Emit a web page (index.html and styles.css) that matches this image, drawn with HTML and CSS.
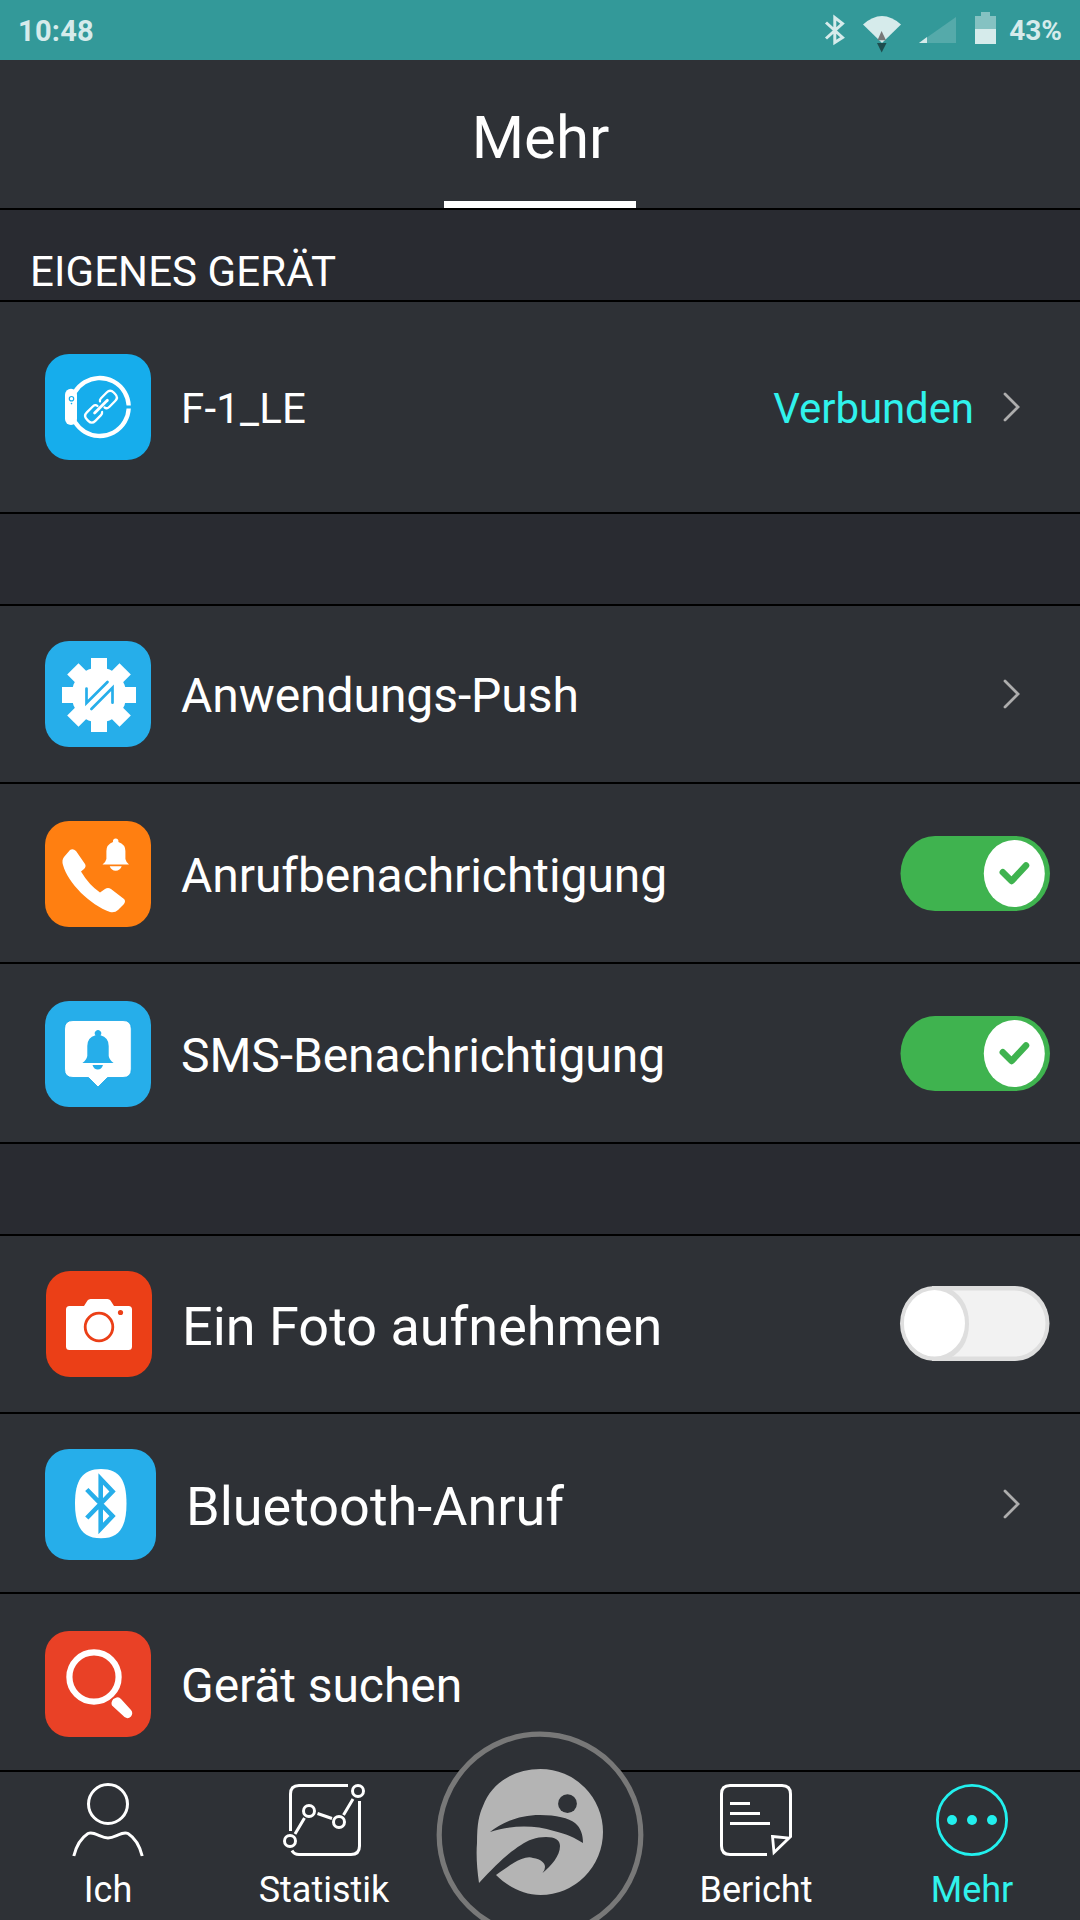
FILE: index.html
```html
<!DOCTYPE html>
<html lang="de">
<head>
<meta charset="utf-8">
<title>Mehr</title>
<link rel="stylesheet" href="styles.css">
</head>
<body>
<div class="screen">
  <div class="statusbar">
    <span class="clock">10:48</span>
    <div class="status-icons">
      <svg class="st-bt" width="20" height="60" viewBox="0 0 20 60" fill="none" stroke="#d6ebeb" stroke-width="3"><path d="M1 22.500 L17.500 37.500 L9.800 42.500 V17.500 L17.500 23.500 L1 38.500"/></svg>
      <svg class="st-wifi" width="38" height="60" viewBox="0 0 38 60"><path fill="#d6ebeb" d="M0 24.500 Q19 7.500 38 24.500 L19 43 Z"/><path fill="#777" d="M14.500 40.300 L18.600 31 L23 40.300 Z"/><path fill="#1d4c4d" d="M14 43 H23.500 L18.700 52.500 Z"/></svg>
      <svg class="st-signal" width="37" height="60" viewBox="0 0 37 60"><path fill="#55aaaa" d="M0 43 L37 17 V43 Z"/><path fill="#d6ebeb" d="M0 43 L8 37 V43 Z"/></svg>
      <svg class="st-batt" width="21" height="60" viewBox="0 0 21 60"><path fill="#85c2c2" d="M6 12 H15 V16 H21 V29 H0 V16 H6 Z"/><path fill="#d6ebeb" d="M0 29 H21 V44 H0 Z"/></svg>
      <span class="percent">43%</span>
    </div>
  </div>

  <header class="header"><h1 class="title">Mehr</h1></header>

  <main class="list">
    <div class="section section-title">EIGENES GERÄT</div>

    <div class="row device">
      <svg class="icon" width="106" height="106" viewBox="0 0 106 106">
        <rect width="106" height="106" rx="24" fill="#16adec"/>
        <path d="M83.700 51.500 A29 29 0 1 0 83.700 54.500" fill="none" stroke="#fff" stroke-width="4.300"/>
        <rect x="20" y="34.700" width="12" height="36.300" rx="6" fill="#fff"/>
        <circle cx="26.500" cy="44.700" r="2.200" fill="none" stroke="#16adec" stroke-width="1.200"/>
        <circle cx="26.500" cy="49.600" r=".8" fill="#16adec"/>
        <g transform="translate(56 52.700) rotate(-45)" fill="none" stroke="#fff" stroke-width="2.300" stroke-linecap="round">
          <path d="M-3 4.500 Q-4 6 -6 6 H-14 Q-19 6 -19 1 V-1 Q-19 -6 -14 -6 H-6 Q-2 -6 -2 -3"/>
          <path d="M3 -4.500 Q4 -6 6 -6 H14 Q19 -6 19 -1 V1 Q19 6 14 6 H6 Q2 6 2 3"/>
          <path d="M-9 0 H9" stroke-width="2.800"/>
        </g>
      </svg>
      <span class="label">F-1_LE</span>
      <span class="state">Verbunden</span>
      <svg class="chevron" width="17" height="30" viewBox="0 0 17 30"><path d="M2 2 L15 15 L2 28"/></svg>
    </div>

    <div class="section"></div>

    <div class="row">
      <svg class="icon" width="106" height="106" viewBox="0 0 106 106">
        <rect width="106" height="106" rx="24" fill="#26aeea"/>
        <g transform="translate(54 54)" fill="#fff">
          <circle r="27.500"/>
          <rect x="-8" y="-37" width="16" height="74"/>
          <rect x="-8" y="-37" width="16" height="74" transform="rotate(45)"/>
          <rect x="-8" y="-37" width="16" height="74" transform="rotate(90)"/>
          <rect x="-8" y="-37" width="16" height="74" transform="rotate(135)"/>
        </g>
        <path d="M41.500 47.500 V62 L62.500 41 M46.400 68 L67.500 46.800 V61.700" fill="none" stroke="#26aeea" stroke-width="2.700" stroke-linecap="round"/>
      </svg>
      <span class="label">Anwendungs-Push</span>
      <svg class="chevron" width="17" height="30" viewBox="0 0 17 30"><path d="M2 2 L15 15 L2 28"/></svg>
    </div>

    <div class="row tall">
      <svg class="icon" width="106" height="106" viewBox="0 0 106 106">
        <rect width="106" height="106" rx="24" fill="#ff7f11"/>
        <path fill="#fff" d="M25 29 Q28 27 31 30 L40 43 Q41.500 45.500 39 48 L36 50.500 Q44 64 55 71.500 L60 68 Q63 66 66 68 L79 78 Q81 80 79 83 L73 89 Q70 92 65 91 C45 84 23 62 18 44 Q16.500 39 19 36 Z"/>
        <path fill="#fff" d="M68 21 A2.800 2.800 0 1 1 73.400 21 Q80.400 23.500 80.400 30 V38 Q81 41 84 43.500 H57.500 Q60.800 41 61.400 38 V30 Q61.400 23.500 68 21 Z M64.700 45.300 H76.700 Q75 49.700 70.700 49.700 Q66.400 49.700 64.700 45.300 Z"/>
      </svg>
      <span class="label">Anrufbenachrichtigung</span>
      <svg class="toggle" width="150" height="75" viewBox="0 0 150 75"><rect x=".5" width="149.500" height="75" rx="34.500" ry="37.500" fill="#3fb34f"/><ellipse cx="114.300" cy="37.500" rx="30.500" ry="33.500" fill="#fff"/><path d="M102.800 36.300 L111.600 45 L126 29.500" fill="none" stroke="#3fb34f" stroke-width="6.500" stroke-linecap="round" stroke-linejoin="round"/></svg>
    </div>

    <div class="row tall">
      <svg class="icon" width="106" height="106" viewBox="0 0 106 106">
        <rect width="106" height="106" rx="24" fill="#26aeea"/>
        <path fill="#fff" stroke="#12a3e6" stroke-width=".8" d="M28 19.500 H78 Q86.300 19.500 86.300 28 V68 Q86.300 76.500 78 76.500 H62.500 L53 86 L43.500 76.500 H28 Q19.500 76.500 19.500 68 V28 Q19.500 19.500 28 19.500 Z"/>
        <path fill="#26aeea" d="M50.500 34.300 A3.200 3.200 0 1 1 55.500 34.300 Q63.700 36.500 63.700 45 V55 Q64.500 59 68.600 62 H37.400 Q41.500 59 42.300 55 V45 Q42.300 36.500 50.500 34.300 Z M47.500 64 H58 Q56.500 68.500 52.800 68.500 Q49 68.500 47.500 64 Z"/>
      </svg>
      <span class="label">SMS-Benachrichtigung</span>
      <svg class="toggle" width="150" height="75" viewBox="0 0 150 75"><rect x=".5" width="149.500" height="75" rx="34.500" ry="37.500" fill="#3fb34f"/><ellipse cx="114.300" cy="37.500" rx="30.500" ry="33.500" fill="#fff"/><path d="M102.800 36.300 L111.600 45 L126 29.500" fill="none" stroke="#3fb34f" stroke-width="6.500" stroke-linecap="round" stroke-linejoin="round"/></svg>
    </div>

    <div class="section"></div>

    <div class="row photo">
      <svg class="icon" width="106" height="106" viewBox="0 0 106 106">
        <rect width="106" height="106" rx="24" fill="#eb3f17"/>
        <path fill="#fff" d="M23.500 35 H38 L41.500 29.500 Q42.500 28 44.500 28 H61.500 Q63.500 28 64.500 29.500 L68 35 H82.500 Q86 35 86 38.500 V75.500 Q86 79 82.500 79 H23.500 Q20 79 20 75.500 V38.500 Q20 35 23.500 35 Z"/>
        <circle cx="53" cy="56" r="13.800" fill="none" stroke="#eb3f17" stroke-width="2.800"/>
        <circle cx="74.500" cy="41.500" r="2.600" fill="#eb3f17"/>
      </svg>
      <span class="label large">Ein Foto aufnehmen</span>
      <svg class="toggle off" width="150" height="75" viewBox="0 0 150 75"><rect width="149.500" height="75" rx="34.500" ry="37.500" fill="#dedede"/><rect x="4" y="4.500" width="141.500" height="66" rx="31" ry="33" fill="#f2f2f2"/><path d="M32 0 H44 Q69 10 69 37.500 Q69 65 44 75 H32 Z" fill="#dedede"/><ellipse cx="34.500" cy="37.300" rx="30.500" ry="33.300" fill="#fff"/></svg>
    </div>

    <div class="row tall call">
      <svg class="icon" width="111" height="111" viewBox="0 0 111 111">
        <rect width="111" height="111" rx="24" fill="#26aeea"/>
        <path fill="#fff" d="M56 20 C75 20 81.500 32 81.500 54.500 C81.500 77 75 89.300 56 89.300 C37 89.300 30 77 30 54.500 C30 32 37 20 56 20 Z"/>
        <path d="M41.800 40.500 L67.500 67 L55.700 79.500 V30 L67.500 42.500 L41.800 69" fill="none" stroke="#26aeea" stroke-width="4.600"/>
      </svg>
      <span class="label large">Bluetooth-Anruf</span>
      <svg class="chevron" width="17" height="30" viewBox="0 0 17 30"><path d="M2 2 L15 15 L2 28"/></svg>
    </div>

    <div class="row last">
      <svg class="icon" width="106" height="106" viewBox="0 0 106 106">
        <rect width="106" height="106" rx="24" fill="#e94126"/>
        <circle cx="49" cy="46" r="24.600" fill="none" stroke="#fff" stroke-width="6.200"/>
        <path d="M68.300 68 L71.500 66.500 Q74 65.500 76 68 L86 79 Q88.500 82 86 85.500 Q83 88.500 79.500 86 L67 74.500 Q65.500 71.500 68.300 68 Z" fill="#fff"/>
      </svg>
      <span class="label">Gerät suchen</span>
    </div>
  </main>

  <nav class="nav">
    <a class="tab">
      <svg width="72" height="72" viewBox="0 0 72 72" fill="none" stroke="#fff" stroke-width="3"><circle cx="36" cy="20" r="19.500"/><path d="M1.800 72 C4 63 9 54 16 49.500 Q18.500 48.300 22 49.500 C28 51.500 31 54 36 54 C41 54 44 51.500 50 49.500 Q53.500 48.300 56 49.500 C63 54 68 63 70.200 72"/></svg>
      <span>Ich</span>
    </a>
    <a class="tab">
      <svg width="84" height="72" viewBox="0 0 84 72" fill="none" stroke="#fff" stroke-width="3"><path d="M66 1.500 H17 Q8.500 1.500 8.500 10 V47 M10 66.500 Q12 70.500 17 70.500 H69 Q77.500 70.500 77.500 62 V17"/><circle cx="8" cy="57" r="5.500"/><circle cx="27" cy="27" r="5.500"/><circle cx="57" cy="38" r="5.500"/><circle cx="76" cy="7" r="5.500"/><path d="M13 50 L22.500 34 M35.500 29.500 L50 34.500 M61.500 31 L71 15"/></svg>
      <span>Statistik</span>
    </a>
    <a class="tab home">
      <svg class="home-logo" width="208" height="208" viewBox="0 0 208 208"><circle cx="104" cy="104" r="100.800" fill="#2e3136" stroke="#787878" stroke-width="5.200"/><path fill="#b4b4b4" d="M43 152 C41 138 40 124 41 112 C41 92 43 84 47 75 C56 51 79 38 104.500 38 A62.500 63 0 0 1 104.500 164 C88 164 72 156 60 144 C68 138 74 134 77.500 132 C84 128 92 125 97 127 C105 128 109 132 109 136 Q109 139 106.500 142 C115 135 124 125 124 115 C124 109 119 106 110 106 C100 106 92 109 85 114 C72 122 60 134 43 152 Z"/><path fill="#2e3136" d="M54 101 C66 91 84 84 104 84 C120 84 133 87 139 92 C145 97 147 104 147 112 C139 107 131 103 118 100 C98 94 76 94 54 101 Z"/><circle cx="131.500" cy="72.700" r="9.400" fill="#2e3136"/></svg>
    </a>
    <a class="tab">
      <svg width="72" height="72" viewBox="0 0 72 72" fill="none" stroke="#fff" stroke-width="3"><path d="M47 70.500 H10 Q1.500 70.500 1.500 62 V10 Q1.500 1.500 10 1.500 H62 Q70.500 1.500 70.500 10 V53"/><path d="M10 19.500 H30 M10 29.500 H40 M10 39.500 H50"/><path d="M52.500 52.500 L69 54 L54 68.500 Z" stroke-width="2.800"/></svg>
      <span>Bericht</span>
    </a>
    <a class="tab active">
      <svg width="72" height="72" viewBox="0 0 72 72"><circle cx="36" cy="36" r="34.600" fill="none" stroke="#22f0ee" stroke-width="2.800"/><g fill="#22f0ee"><circle cx="16" cy="36" r="5"/><circle cx="36" cy="36" r="5"/><circle cx="56" cy="36" r="5"/></g></svg>
      <span>Mehr</span>
    </a>
  </nav>
</div>
</body>
</html>
```
FILE: styles.css
```css
* { box-sizing: border-box; }

body {
  margin: 0;
  background: #2e3136;
  color: #fff;
  font-family: Roboto, "Liberation Sans", sans-serif;
}

svg { display: block; flex: none; overflow: visible; }

.screen {
  width: 1080px;
  height: 1920px;
  overflow: hidden;
  display: flex;
  flex-direction: column;
}

.statusbar {
  height: 60px;
  padding: 0 18px;
  display: flex;
  justify-content: space-between;
  align-items: center;
  background: #339999;
  color: #d6ebeb;
  font-size: 29px;
  font-weight: 700;
  line-height: 60px;
}

.clock, .percent { padding-top: 2px; line-height: 58px; }
.clock { letter-spacing: 0.25px; }
.percent { font-size: 28px; margin-left: 13px; }
.status-icons { display: flex; align-items: center; }
.st-wifi { margin-left: 18px; }
.st-signal { margin-left: 18px; }
.st-batt { margin-left: 19px; }

.header {
  height: 150px;
  border-bottom: 2px solid #000;
  display: flex;
  justify-content: center;
}

.title {
  margin: 0;
  width: 192px;
  height: 148px;
  border-bottom: 7px solid #fff;
  font-size: 60px;
  font-weight: 400;
  line-height: 156px;
  text-align: center;
  text-indent: 1px;
}

.section {
  height: 92px;
  background: #292b31;
  border-bottom: 2px solid #000;
}

.section-title {
  padding: 22px 30px 0;
  font-size: 42px;
  line-height: 80px;
  letter-spacing: 0.08px;
}

.row {
  height: 178px;
  padding: 0 30px 0 45px;
  border-bottom: 2px solid #000;
  display: flex;
  align-items: center;
}

.device { height: 212px; }
.tall { height: 180px; padding-top: 1px; }
.call { padding-top: 2px; }
.photo { padding-left: 46px; }
.last { padding-top: 3px; }

.label {
  flex: 1;
  margin-left: 30px;
  font-size: 48px;
  line-height: 64px;
  padding-top: 4px;
  letter-spacing: -0.07px;
  white-space: nowrap;
}

.device .label, .state { font-size: 42px; padding-top: 4px; line-height: 56px; }
.device .label { letter-spacing: 0.2px; }
.label.large { font-size: 54px; padding-top: 6px; letter-spacing: 0; }
.call .label.large { padding-top: 5px; }
.state { color: #30f2ec; letter-spacing: -0.08px; }

.chevron {
  margin: 0 30px 0 29px;
  fill: none;
  stroke: #adadad;
  stroke-width: 2.8;
  stroke-linecap: round;
}

.off { margin-bottom: 1px; }

.nav {
  height: 148px;
  display: grid;
  grid-template-columns: repeat(5, 216px);
}

.tab {
  position: relative;
  padding-top: 12px;
  display: flex;
  flex-direction: column;
  align-items: center;
  font-size: 36px;
  line-height: 44px;
}

.tab span { margin-top: 12px; }
.active { color: #30f2ec; }

.home-logo {
  position: absolute;
  left: 4px;
  top: -41px;
}
```
